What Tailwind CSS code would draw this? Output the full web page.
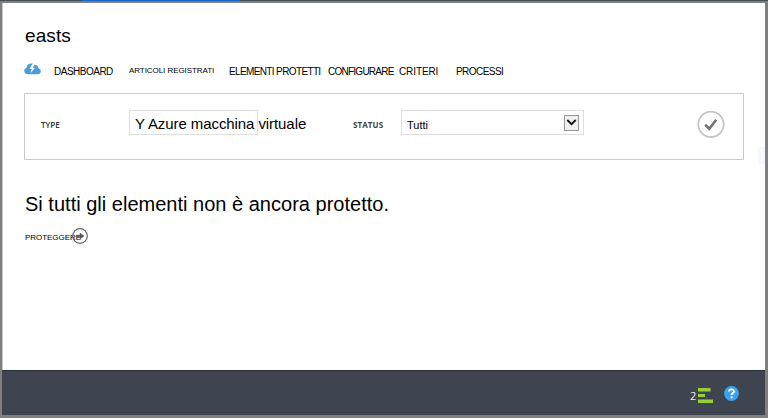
<!DOCTYPE html>
<html lang="it">
<head>
<meta charset="utf-8">
<title>easts</title>
<script src="https://cdn.jsdelivr.net/npm/@tailwindcss/browser@4"></script>
</head>
<body class="w-[768px] h-[418px] overflow-hidden bg-[#7f7e80] font-['Liberation_Sans',Arial,sans-serif] text-black flex flex-col whitespace-nowrap">
<div class="h-px shrink-0 bg-[#454c59] pl-[82px]"><div class="h-px w-[158px] bg-[#1268cb]"></div></div>
<div class="mt-[2px] ml-[2px] mr-[3px] h-[412px] flex flex-col bg-white border-l border-[#c8c8c8]">
  <main class="h-[367px] pl-[21px] pr-[21px]">
    <h1 class="h-[20px] mt-[23px] pl-px text-[19px] leading-[20px] tracking-[0.1px]">easts</h1>
    <nav class="mt-[14px] h-[20px] flex text-[10px] leading-[12px]">
      <svg class="w-[17px] h-[12px] mt-[3px] shrink-0" viewBox="0 0 17 12"><path fill="#4b9cd8" d="M4 11.2C1.5 11.2.2 9.900.2 8.100c0-1.700 1-2.700 2.300-3C2.600 2.100 4.500.6 7 .6c1.600 0 2.700.500 3.400 1.400 2.300-.3 3.900 1 4 3.300 1.600.500 2.400 1.500 2.400 2.900 0 1.900-1.300 3-3.300 3z"/><path fill="#fff" d="M8.800.5 5.400 6h2.300L6.600 10.300 11 4.700H8.700L11.200.6z"/></svg>
      <div class="ml-[13px] mt-[6px] w-[75px] tracking-[-0.5px]">DASHBOARD</div>
      <div class="mt-[5px] w-[100px] text-[8px] tracking-[-0.06px]">ARTICOLI REGISTRATI</div>
      <div class="mt-[6px] w-[99px] tracking-[-0.63px]">ELEMENTI PROTETTI</div>
      <div class="mt-[6px] w-[71px] tracking-[-0.75px]">CONFIGURARE</div>
      <div class="mt-[6px] w-[57px] tracking-[-0.1px]">CRITERI</div>
      <div class="mt-[6px] tracking-[-0.55px]">PROCESSI</div>
    </nav>
    <section class="mt-[13px] h-[67px] w-[720px] border border-[#cbcbcb] flex pl-[16px] pt-[16px]">
      <div class="w-[88px] pt-[9px] text-[8px] leading-[12px] font-semibold font-['Open_Sans',sans-serif] text-[#333]">TYPE</div>
      <div class="w-[129px] h-[25px] border border-[#dedede] pl-[5px] text-[15px] leading-[25px] tracking-[-0.08px]">Y Azure macchina virtuale</div>
      <div class="ml-[95px] w-[48px] pt-[9px] text-[8px] leading-[12px] font-bold tracking-[0.1px] font-['Open_Sans',sans-serif] text-[#444]">STATUS</div>
      <div class="w-[183px] h-[25px] border border-[#dedede] pl-[5px] pr-[4px] flex items-center justify-between text-[11px]">
        <span class="pt-[6px] leading-[13px]">Tutti</span>
        <svg class="w-[15px] h-[16px]" viewBox="0 0 15 16"><rect x=".5" y=".5" width="14" height="15" fill="#f0f0f0" stroke="#969696"/><path d="m3.300 5 4.200 4.200L11.700 5" fill="none" stroke="#111" stroke-width="1.800"/></svg>
      </div>
      <svg class="ml-[113px] w-[28px] h-[28px]" viewBox="0 0 28 28"><circle cx="14" cy="14.300" r="12.700" fill="#fff" stroke="#c5c5c5" stroke-width="1.800"/><path d="m8.200 14.800 4.100 4 6.900-9" fill="none" stroke="#737373" stroke-width="2.600"/></svg>
    </section>
    <h2 class="mt-[32px] h-[24px] pl-px text-[20px] leading-[24px] tracking-[0.01px]">Si tutti gli elementi non è ancora protetto.</h2>
    <div class="mt-[11px] h-[18px] pl-px flex items-center text-[8px]">
      <span class="w-[47px] pt-[3px] tracking-[-0.05px]">PROTEGGERE</span>
      <svg class="w-[16px] h-[16px] shrink-0" viewBox="0 0 16 16"><circle cx="8" cy="8" r="7.300" fill="none" stroke="#666" stroke-width="1.200"/><path d="M4 7.200h4V5l4 3-4 3V8.800H4z" fill="#555" stroke="#555" stroke-width=".5"/></svg>
    </div>
  </main>
  <footer class="-ml-px h-[45px] border-t border-[#26303b] bg-[#3e4550] flex pl-[688px]">
    <span class="w-[8px] pt-[18px] text-[11px] leading-[13px] font-['Open_Sans',sans-serif] text-[#eee]">2</span>
    <svg class="mt-[17px] w-[15px] h-[15px]" viewBox="0 0 15 15" fill="#97cf35"><path d="M0 0h12.500v3.500H0zM0 6h7v3H0zM0 11.500h15V15H0z"/></svg>
    <svg class="ml-[11px] mt-[15px] w-[15px] h-[15px]" viewBox="0 0 15 15"><circle cx="7.500" cy="7.500" r="7.400" fill="#3aa2f4"/><path d="M5 5.500C5.200 2.800 10 2.700 10 5.400c0 1.700-2.400 1.700-2.400 3.700M7.600 10.300v2" fill="none" stroke="#fff" stroke-width="1.900"/></svg>
  </footer>
</div>
<div class="absolute left-[758px] top-[147px] h-[17px] w-[7px] bg-[#f5f9fe]"></div>
</body>
</html>
